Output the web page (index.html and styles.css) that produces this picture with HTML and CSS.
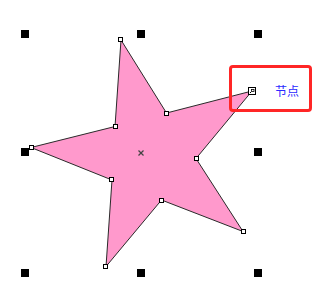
FILE: index.html
```html
<!DOCTYPE html>
<html lang="zh">
<head>
<meta charset="utf-8">
<link rel="stylesheet" href="styles.css">
</head>
<body>
<svg class="canvas" width="321" height="301" viewBox="0 0 321 301" xmlns="http://www.w3.org/2000/svg">
  <polygon class="star" points="121,40 166.5,113 252,91 196,158.5 243,231.5 161.5,200 106,266.5 112,180 31,147.5 115,126.5"/>
  <g class="handles">
    <rect x="21" y="30" width="8" height="8"/>
    <rect x="137" y="30" width="8" height="8"/>
    <rect x="254" y="30" width="8" height="8"/>
    <rect x="21" y="148" width="8" height="8"/>
    <rect x="254" y="148" width="8" height="8"/>
    <rect x="21" y="269" width="8" height="8"/>
    <rect x="137" y="269" width="8" height="8"/>
    <rect x="254" y="269" width="8" height="8"/>
  </g>
  <g class="nodes">
    <rect x="118.5" y="37.5" width="4" height="4"/>
    <rect x="164.5" y="111.5" width="4" height="4"/>
    <rect x="194.5" y="156.5" width="4" height="4"/>
    <rect x="241.5" y="229.5" width="4" height="4"/>
    <rect x="159.5" y="198.5" width="4" height="4"/>
    <rect x="103.5" y="264.5" width="4" height="4"/>
    <rect x="109.5" y="177.5" width="4" height="4"/>
    <rect x="29.5" y="145.5" width="4" height="4"/>
    <rect x="113.5" y="124.5" width="4" height="4"/>
  </g>
  <g class="active">
    <rect class="outer" x="248.5" y="87.5" width="7" height="7"/>
    <rect class="inner" x="251.5" y="89.5" width="2.5" height="2"/>
    <rect class="dot" x="250" y="92" width="1" height="1"/>
  </g>
  <g class="center">
    <line x1="138.5" y1="150.5" x2="143.5" y2="155.5"/>
    <line x1="143.5" y1="150.5" x2="138.5" y2="155.5"/>
  </g>
  <rect class="callout" x="230.5" y="66.5" width="80" height="44" rx="2.5" ry="2.5"/>
  <text class="label" x="275" y="96">节点</text>
</svg>
</body>
</html>
```
FILE: styles.css
```css
html, body {
  margin: 0;
  padding: 0;
  background: #ffffff;
}
.canvas {
  display: block;
}
.star {
  fill: #ff99cc;
  stroke: #2a2a2a;
  stroke-width: 1;
  stroke-linejoin: miter;
}
.handles rect {
  fill: #000000;
}
.nodes rect {
  fill: #ffffff;
  stroke: #000000;
  stroke-width: 1;
}
.active .outer {
  fill: #ffffff;
  stroke: #000000;
  stroke-width: 1;
}
.active .inner {
  fill: #ffffff;
  stroke: #000000;
  stroke-width: 0.8;
}
.active .dot {
  fill: #000000;
}
.center line {
  stroke: #444444;
  stroke-width: 1.3;
}
.callout {
  fill: none;
  stroke: #ff2626;
  stroke-width: 3;
}
.label {
  font-family: "Noto Sans CJK SC", "Noto Sans", sans-serif;
  font-size: 12px;
  fill: #2a2aff;
}
```
